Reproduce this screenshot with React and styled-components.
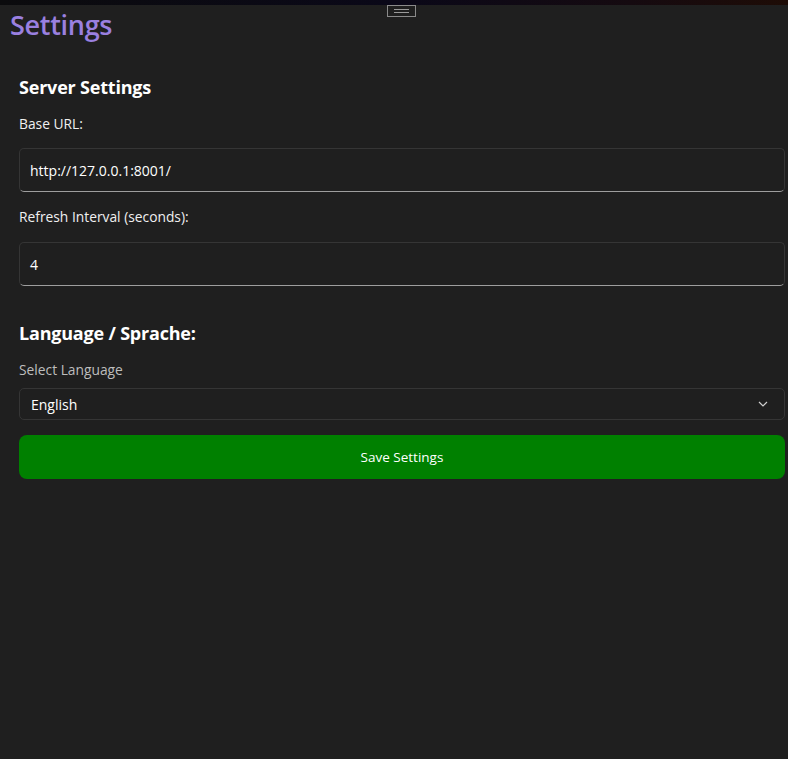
import styled, { createGlobalStyle } from 'styled-components'

const GlobalStyle = createGlobalStyle`
    html, body {
        margin: 0;
        padding: 0;
        background: #1f1f1f;
        font-family: "Open Sans", "Noto Sans", sans-serif;
        color: #f2f2f2;
    }
`

const Page = styled.div`
    position: relative;
    min-height: 759px;
    background: #1f1f1f;
`

const TopStrip = styled.div`
    height: 5px;
    background: linear-gradient(90deg, #0b0b0d 0%, #0a0818 50%, #150a10 80%, #1e0c06 100%);
`

const DragHandle = styled.div`
    position: absolute;
    top: 5px;
    left: 387px;
    width: 29px;
    height: 12px;
    border: 1px solid #8a8a8a;
    display: flex;
    flex-direction: column;
    justify-content: center;
    gap: 2px;
    padding: 0 6px;
    box-sizing: border-box;

    span {
        display: block;
        height: 1px;
        background: #9a9a9a;
    }
`

const Title = styled.h1`
    margin: 0;
    padding: 2px 0 0 10px;
    font-size: 27px;
    font-weight: 600;
    line-height: 36px;
    color: #9a80e0;
    letter-spacing: -0.3px;
`

const Content = styled.div`
    padding: 0 3px 0 19px;
    display: flex;
    flex-direction: column;
`

const SectionTitle = styled.h2`
    margin: ${({ first }) => (first ? '32px' : '35px')} 0 0;
    font-size: 18px;
    font-weight: 700;
    line-height: 24px;
    letter-spacing: -0.2px;
    color: #ffffff;
`

const Label = styled.label`
    display: block;
    font-size: 13.8px;
    line-height: 20px;
    color: ${({ muted }) => (muted ? '#bdbdbd' : '#f0f0f0')};
    margin-top: ${({ top }) => top}px;
`

const TextInput = styled.div`
    margin-top: ${({ top }) => top}px;
    height: 44px;
    box-sizing: border-box;
    border: 1px solid #353535;
    border-bottom: 1px solid #9e9e9e;
    border-radius: 5px;
    background: #1f1f1f;
    display: flex;
    align-items: center;
    padding-left: 10px;
    font-size: 14px;
    color: #ffffff;
`

const Select = styled.div`
    margin-top: 8px;
    height: 32px;
    box-sizing: border-box;
    border: 1px solid #353535;
    border-radius: 5px;
    display: flex;
    align-items: center;
    justify-content: space-between;
    padding: 0 16px 0 11px;
    font-size: 14px;
    color: #ffffff;
`

const SaveButton = styled.button`
    margin-top: 15px;
    height: 44px;
    border: none;
    border-radius: 8px;
    background: #008000;
    color: #ffffff;
    font-family: inherit;
    font-size: 13.5px;
`

const Chevron = () => (
    <svg width="10" height="6" viewBox="0 0 10 6" fill="none">
        <path d="M1 1l4 4 4-4" stroke="#cfcfcf" strokeWidth="1.2" />
    </svg>
)

export default function App() {
    return (
        <Page>
            <GlobalStyle />
            <TopStrip />
            <DragHandle>
                <span />
                <span />
            </DragHandle>
            <Title>Settings</Title>
            <Content>
                <SectionTitle first>Server Settings</SectionTitle>
                <Label top={15}>Base URL:</Label>
                <TextInput top={14}>http://127.0.0.1:8001/</TextInput>
                <Label top={15}>Refresh Interval (seconds):</Label>
                <TextInput top={15}>4</TextInput>
                <SectionTitle>Language / Sprache:</SectionTitle>
                <Label muted top={15}>Select Language</Label>
                <Select>
                    English
                    <Chevron />
                </Select>
                <SaveButton>Save Settings</SaveButton>
            </Content>
        </Page>
    )
}
